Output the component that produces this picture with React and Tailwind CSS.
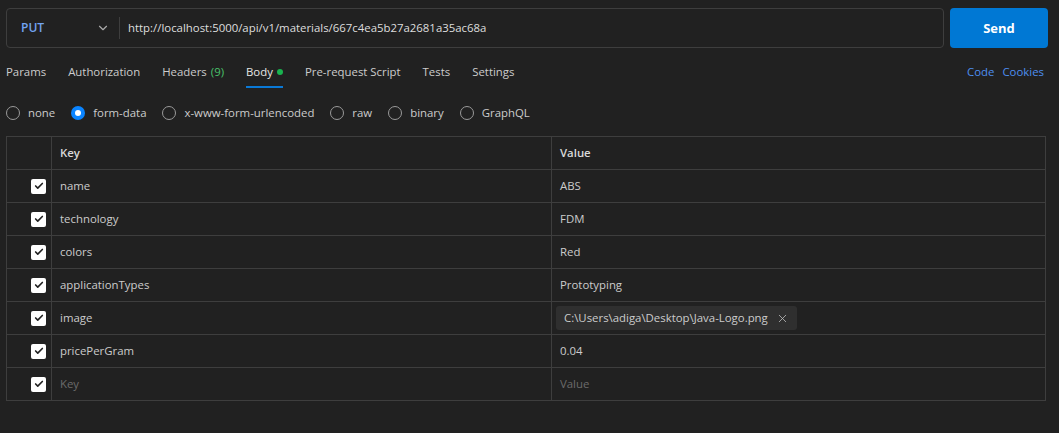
import { ChevronDown, X, Check } from "lucide-react";

const rows = [
  { key: "name", value: "ABS" },
  { key: "technology", value: "FDM" },
  { key: "colors", value: "Red" },
  { key: "applicationTypes", value: "Prototyping" },
  { key: "image", file: "C:\\Users\\adiga\\Desktop\\Java-Logo.png" },
  { key: "pricePerGram", value: "0.04" },
];

const tabs = ["Params", "Authorization", "Headers", "Body", "Pre-request Script", "Tests", "Settings"];
const bodyTypes = ["none", "form-data", "x-www-form-urlencoded", "raw", "binary", "GraphQL"];

const Box = () => (
  <div className="w-[15px] h-[15px] rounded-[2px] bg-white flex items-center justify-center">
    <Check className="w-[10px] h-[10px] text-[#212121]" strokeWidth={4} />
  </div>
);

export default function App() {
  return (
    <div
      className="w-[1059px] h-[433px] bg-[#212121] text-[#cccccc] text-[11.4px] overflow-hidden"
      style={{ fontFamily: "'Open Sans', 'Noto Sans', sans-serif" }}
    >
      {/* request bar */}
      <div className="flex gap-[6px] pl-[6px] pt-[8px] pr-[11px]">
        <div className="flex-1 h-[40px] border border-[#3e3e3e] rounded-[4px] flex items-center">
          <div className="w-[112px] flex items-center justify-between pl-[14px] pr-[9px]">
            <span className="text-[#73a5f2] font-semibold text-[12px]">PUT</span>
            <ChevronDown className="w-[14px] h-[14px] text-[#aaaaaa]" />
          </div>
          <div className="w-px h-[22px] bg-[#3e3e3e]" />
          <span className="pl-[8px] text-[#dedede]">http://localhost:5000/api/v1/materials/667c4ea5b27a2681a35ac68a</span>
        </div>
        <button className="w-[98px] h-[40px] pt-px rounded-[4px] bg-[#0078d4] text-white font-bold text-[13px]">Send</button>
      </div>

      {/* tabs */}
      <div className="flex items-center justify-between pl-[6px] pr-[15px] h-[48px]">
        <div className="flex gap-[22px] h-full">
          {tabs.map((t) => (
            <div
              key={t}
              className={
                "relative flex items-center " + (t === "Body" ? "text-[#e6e6e6]" : "text-[#cccccc]")
              }
            >
              {t}
              {t === "Headers" && <span className="ml-[4px] text-[#49c26a]">(9)</span>}
              {t === "Body" && <span className="ml-[4px] w-[6px] h-[6px] rounded-full bg-[#19b34f]" />}
              {t === "Body" && <div className="absolute left-0 right-0 bottom-[8px] h-[2px] bg-[#0a79d6]" />}
            </div>
          ))}
        </div>
        <div className="flex gap-[8px] text-[#4d8ff0]">
          <span>Code</span>
          <span>Cookies</span>
        </div>
      </div>

      {/* body type */}
      <div className="flex items-center gap-[16px] pl-[6px] h-[34px]">
        {bodyTypes.map((b) => (
          <label key={b} className="flex items-center gap-[8px]">
            {b === "form-data" ? (
              <span className="w-[14px] h-[14px] rounded-full bg-[#0a84ff] flex items-center justify-center">
                <span className="w-[6px] h-[6px] rounded-full bg-white" />
              </span>
            ) : (
              <span className="w-[14px] h-[14px] rounded-full border border-[#9a9a9a]" />
            )}
            <span>{b}</span>
          </label>
        ))}
      </div>

      {/* table */}
      <div className="ml-[6px] mt-[6px] w-[1040px] border border-[#3e3e3e]">
        <div className="flex h-[33px] border-b border-[#3e3e3e] font-semibold text-[#d9d9d9]">
          <div className="w-[45px] border-r border-[#3e3e3e]" />
          <div className="w-[500px] border-r border-[#3e3e3e] flex items-center pl-[8px]">Key</div>
          <div className="flex-1 flex items-center pl-[8px]">Value</div>
        </div>
        {rows.map((r) => (
          <div key={r.key} className="flex h-[33px] border-b border-[#3e3e3e]">
            <div className="w-[45px] border-r border-[#3e3e3e] flex items-center justify-end pr-[5px]">
              <Box />
            </div>
            <div className="w-[500px] border-r border-[#3e3e3e] flex items-center pl-[8px]">{r.key}</div>
            <div className="flex-1 flex items-center pl-[8px]">
              {r.file ? (
                <span className="-ml-[4px] flex items-center gap-[8px] h-[24px] px-[8px] rounded-[3px] bg-[#2f2f2f]">
                  {r.file}
                  <X className="w-[13px] h-[13px] text-[#bbbbbb]" strokeWidth={1.5} />
                </span>
              ) : (
                r.value
              )}
            </div>
          </div>
        ))}
        <div className="flex h-[32px]">
          <div className="w-[45px] border-r border-[#3e3e3e] flex items-center justify-end pr-[5px]">
            <Box />
          </div>
          <div className="w-[500px] border-r border-[#3e3e3e] flex items-center pl-[8px] text-[#6b6b6b]">Key</div>
          <div className="flex-1 flex items-center pl-[8px] text-[#6b6b6b]">Value</div>
        </div>
      </div>
    </div>
  );
}
